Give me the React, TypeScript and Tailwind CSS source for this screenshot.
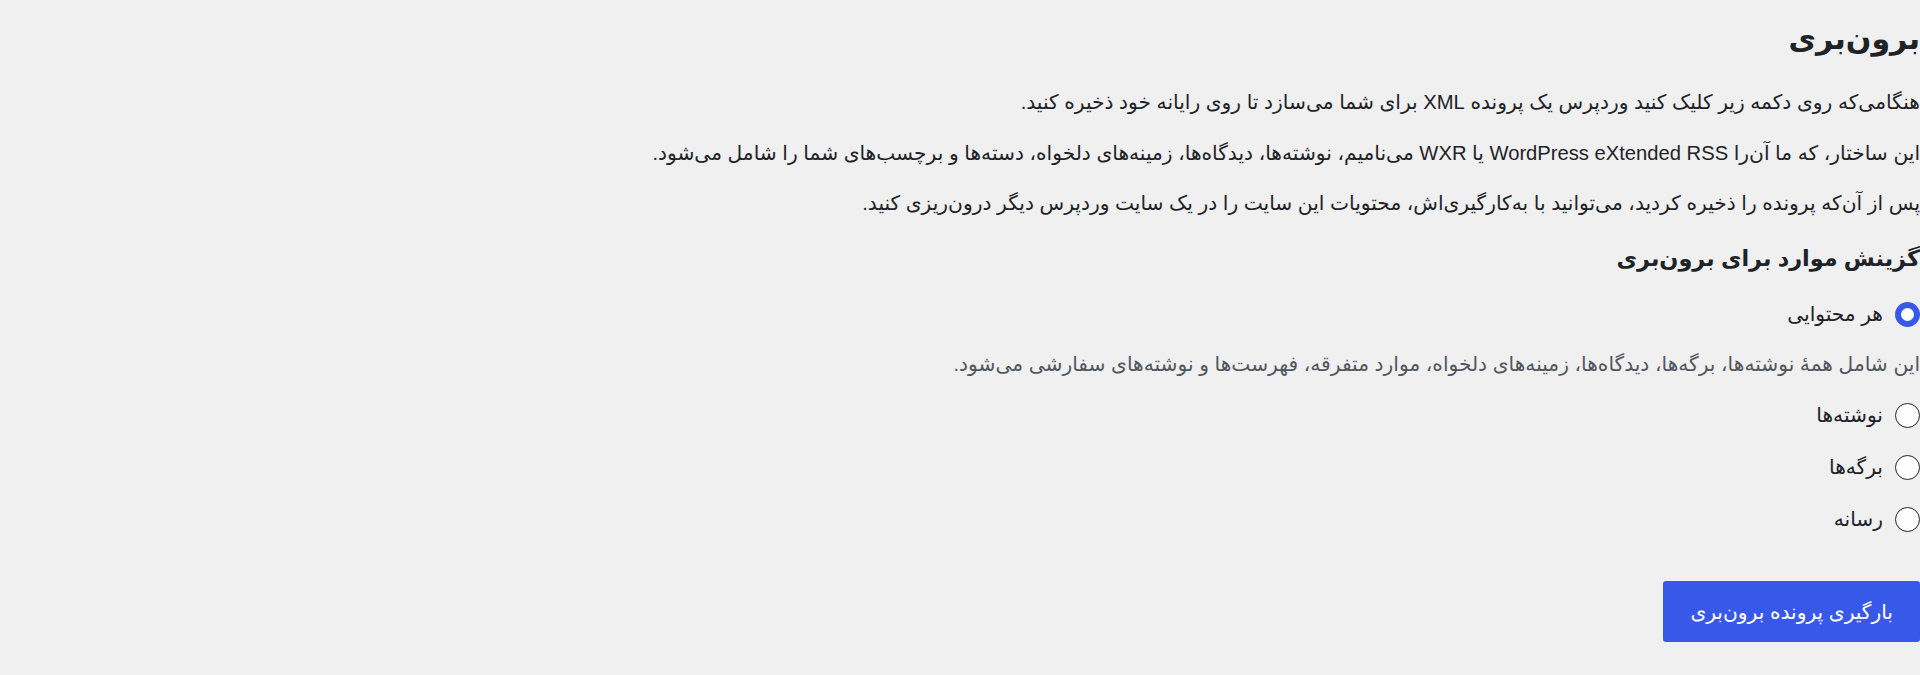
import React, { useState } from 'react';

type Choice = 'all' | 'posts' | 'pages' | 'attachment';

const options: { value: Choice; label: string }[] = [
  { value: 'posts', label: 'نوشته‌ها' },
  { value: 'pages', label: 'برگه‌ها' },
  { value: 'attachment', label: 'رسانه' },
];

const Radio: React.FC<{ checked: boolean; label: string; onSelect: () => void }> = ({ checked, label, onSelect }) => (
  <label className="flex items-center gap-3 h-[30px] cursor-pointer" onClick={onSelect}>
    <span
      className={`shrink-0 w-[25px] h-[25px] rounded-full bg-white ${
        checked ? 'border-[6px] border-[#3858e9]' : 'border-[1.5px] border-[#1d2327]'
      }`}
    />
    <span className="leading-[30px]">{label}</span>
  </label>
);

export default function App() {
  const [choice, setChoice] = useState<Choice>('all');

  return (
    <div
      dir="rtl"
      className="min-h-screen bg-[#f0f0f1] text-[#1d2327] text-[20.2px] font-['Liberation_Sans','DejaVu_Sans',sans-serif] pt-[20px]"
    >
      <h1 className="text-[30px] font-bold leading-[38px]">برون‌بری</h1>

      <p className="mt-[29px] leading-[30px]">
        هنگامی‌که روی دکمه زیر کلیک کنید وردپرس یک پرونده XML برای شما می‌سازد تا روی رایانه خود ذخیره کنید.
      </p>
      <p className="mt-[21px] leading-[30px]">
        این ساختار، که ما آن‌را WordPress eXtended RSS یا WXR می‌نامیم، نوشته‌ها، دیدگاه‌ها، زمینه‌های دلخواه، دسته‌ها و برچسب‌های شما را شامل می‌شود.
      </p>
      <p className="mt-[20px] leading-[30px]">
        پس از آن‌که پرونده را ذخیره کردید، می‌توانید با به‌کارگیری‌اش، محتویات این سایت را در یک سایت وردپرس دیگر درون‌ریزی کنید.
      </p>

      <h2 className="mt-[26px] text-[22.4px] font-bold leading-[30px]">گزینش موارد برای برون‌بری</h2>

      <div className="mt-[25px] flex flex-col items-start">
        <Radio checked={choice === 'all'} label="هر محتوایی" onSelect={() => setChoice('all')} />
        <p className="mt-[20px] leading-[30px] text-[#50575e]">
          این شامل همهٔ نوشته‌ها، برگه‌ها، دیدگاه‌ها، زمینه‌های دلخواه، موارد متفرقه، فهرست‌ها و نوشته‌های سفارشی می‌شود.
        </p>
        <div className="mt-[21px] flex flex-col gap-[22px]">
          {options.map(o => (
            <Radio key={o.value} checked={choice === o.value} label={o.label} onSelect={() => setChoice(o.value)} />
          ))}
        </div>
      </div>

      <button
        type="button"
        className="mt-[47px] h-[61px] px-[27px] rounded-[3px] bg-[#3858e9] text-white leading-[30px] hover:bg-[#2145e6]"
      >
        بارگیری پرونده برون‌بری
      </button>
    </div>
  );
}
